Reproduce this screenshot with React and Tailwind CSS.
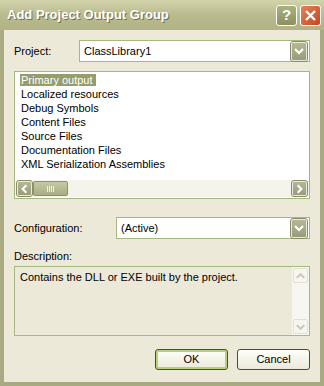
import React from "react";

const items = [
  "Primary output",
  "Localized resources",
  "Debug Symbols",
  "Content Files",
  "Source Files",
  "Documentation Files",
  "XML Serialization Assemblies",
];

function Chevron({ dir = "down", color = "#fff" }) {
  const d = {
    down: "M3 5 L7 9 L11 5",
    up: "M3 9 L7 5 L11 9",
    left: "M9 3 L5 7 L9 11",
    right: "M5 3 L9 7 L5 11",
  }[dir];
  return (
    <svg width="14" height="14" viewBox="0 0 14 14">
      <path d={d} fill="none" stroke={color} strokeWidth="2.2" />
    </svg>
  );
}

function DropButton() {
  return (
    <div className="flex h-[19px] w-[16px] items-center justify-center rounded-[2px] border border-[#e8e9dc] bg-gradient-to-b from-[#b5b796] to-[#999c78] outline outline-1 outline-[#8a8c6c]">
      <Chevron dir="down" />
    </div>
  );
}

function Combo({ value, className }) {
  return (
    <div className={"flex h-[22px] items-center border border-[#a4b97f] bg-white pl-[4px] pr-[2px] " + className}>
      <span className="flex-1">{value}</span>
      <DropButton />
    </div>
  );
}

function ScrollBtn({ dir, disabled }) {
  return disabled ? (
    <div className="flex h-[15px] w-[15px] items-center justify-center rounded-[2px] border border-[#e2e0d2] bg-[#f6f5ee]">
      <Chevron dir={dir} color="#c9c7ba" />
    </div>
  ) : (
    <div className="flex h-[15px] w-[15px] items-center justify-center rounded-[2px] border border-[#e9eadc] bg-gradient-to-b from-[#b5b796] to-[#999c78] outline outline-1 outline-[#8a8c6c]">
      <Chevron dir={dir} />
    </div>
  );
}

export default function App() {
  return (
    <div
      className="flex h-[386px] w-[324px] flex-col bg-[#a9aa82] text-[11px] text-black"
      style={{ fontFamily: '"Liberation Sans", Tahoma, sans-serif' }}
    >
      {/* TITLE BAR */}
      <div className="flex h-[30px] items-center bg-gradient-to-b from-[#d3d4ab] via-[#b9ba8e] to-[#b1b286] pl-[7px] pr-[3px]">
        <span className="flex-1 text-[13px] font-bold text-white [text-shadow:1px_1px_0_#6f7050]">
          Add Project Output Group
        </span>
        <div className="flex gap-[3px]">
          <div className="flex h-[21px] w-[21px] items-center justify-center rounded-[3px] border border-white bg-gradient-to-b from-[#aab07e] to-[#8c925f] text-[15px] font-bold text-white">
            ?
          </div>
          <div className="flex h-[21px] w-[21px] items-center justify-center rounded-[3px] border border-white bg-gradient-to-br from-[#e6825a] to-[#c4461d]">
            <svg width="13" height="13" viewBox="0 0 13 13">
              <path d="M2 2 L11 11 M11 2 L2 11" stroke="#fff" strokeWidth="2.4" />
            </svg>
          </div>
        </div>
      </div>

      {/* BODY */}
      <div className="mx-[4px] flex flex-1 flex-col bg-[#ece9d8] px-[10px] pt-[10px]">
        <div className="flex items-center">
          <span className="w-[65px]">Project:</span>
          <Combo value="ClassLibrary1" className="flex-1" />
        </div>

        <div className="mt-[9px] flex h-[128px] flex-col border border-[#a4b97f] bg-white">
          <div className="flex-1 px-[5px] pt-[1px]">
            {items.map((it, i) => (
              <div key={it} className="h-[14px] leading-[14px]">
                <span className={i === 0 ? "bg-[#969d6d] px-[1px] pr-[3px] text-white" : "px-[1px]"}>{it}</span>
              </div>
            ))}
          </div>
          <div className="mb-[1px] flex h-[17px] items-center bg-[#f4f3ec] px-[2px]">
            <ScrollBtn dir="left" />
            <div className="ml-[1px] flex h-[15px] w-[35px] items-center justify-center rounded-[2px] border border-[#8c9168] bg-gradient-to-b from-[#c6c9a3] to-[#aaae83]">
              <svg width="7" height="6" viewBox="0 0 7 6">
                <path d="M0.5 0 V6 M2.5 0 V6 M4.5 0 V6 M6.5 0 V6" stroke="#eef0dc" strokeWidth="1" />
              </svg>
            </div>
            <div className="flex-1" />
            <ScrollBtn dir="right" />
          </div>
        </div>

        <div className="mt-[18px] flex items-center">
          <span className="w-[102px]">Configuration:</span>
          <Combo value="(Active)" className="flex-1" />
        </div>

        <div className="mt-[10px] h-[14px] leading-[14px]">Description:</div>
        <div className="mt-[3px] flex h-[70px] border border-[#a4b97f] bg-[#ece9d8]">
          <div className="flex-1 px-[5px] pt-[2px]">Contains the DLL or EXE built by the project.</div>
          <div className="flex w-[17px] flex-col items-center justify-between bg-[#f7f6f0] py-[1px]">
            <ScrollBtn dir="up" disabled />
            <ScrollBtn dir="down" disabled />
          </div>
        </div>

        <div className="mt-[13px] flex justify-end gap-[9px]">
          <button className="h-[21px] w-[73px] rounded-[3px] border border-[#45502e] bg-gradient-to-b from-[#fffffb] to-[#ece9d8] shadow-[inset_0_0_0_2px_#b5d17c]">
            OK
          </button>
          <button className="h-[21px] w-[73px] rounded-[3px] border border-[#45502e] bg-gradient-to-b from-[#fffffb] to-[#ece9d8]">
            Cancel
          </button>
        </div>
      </div>
      <div className="h-[4px]" />
    </div>
  );
}
